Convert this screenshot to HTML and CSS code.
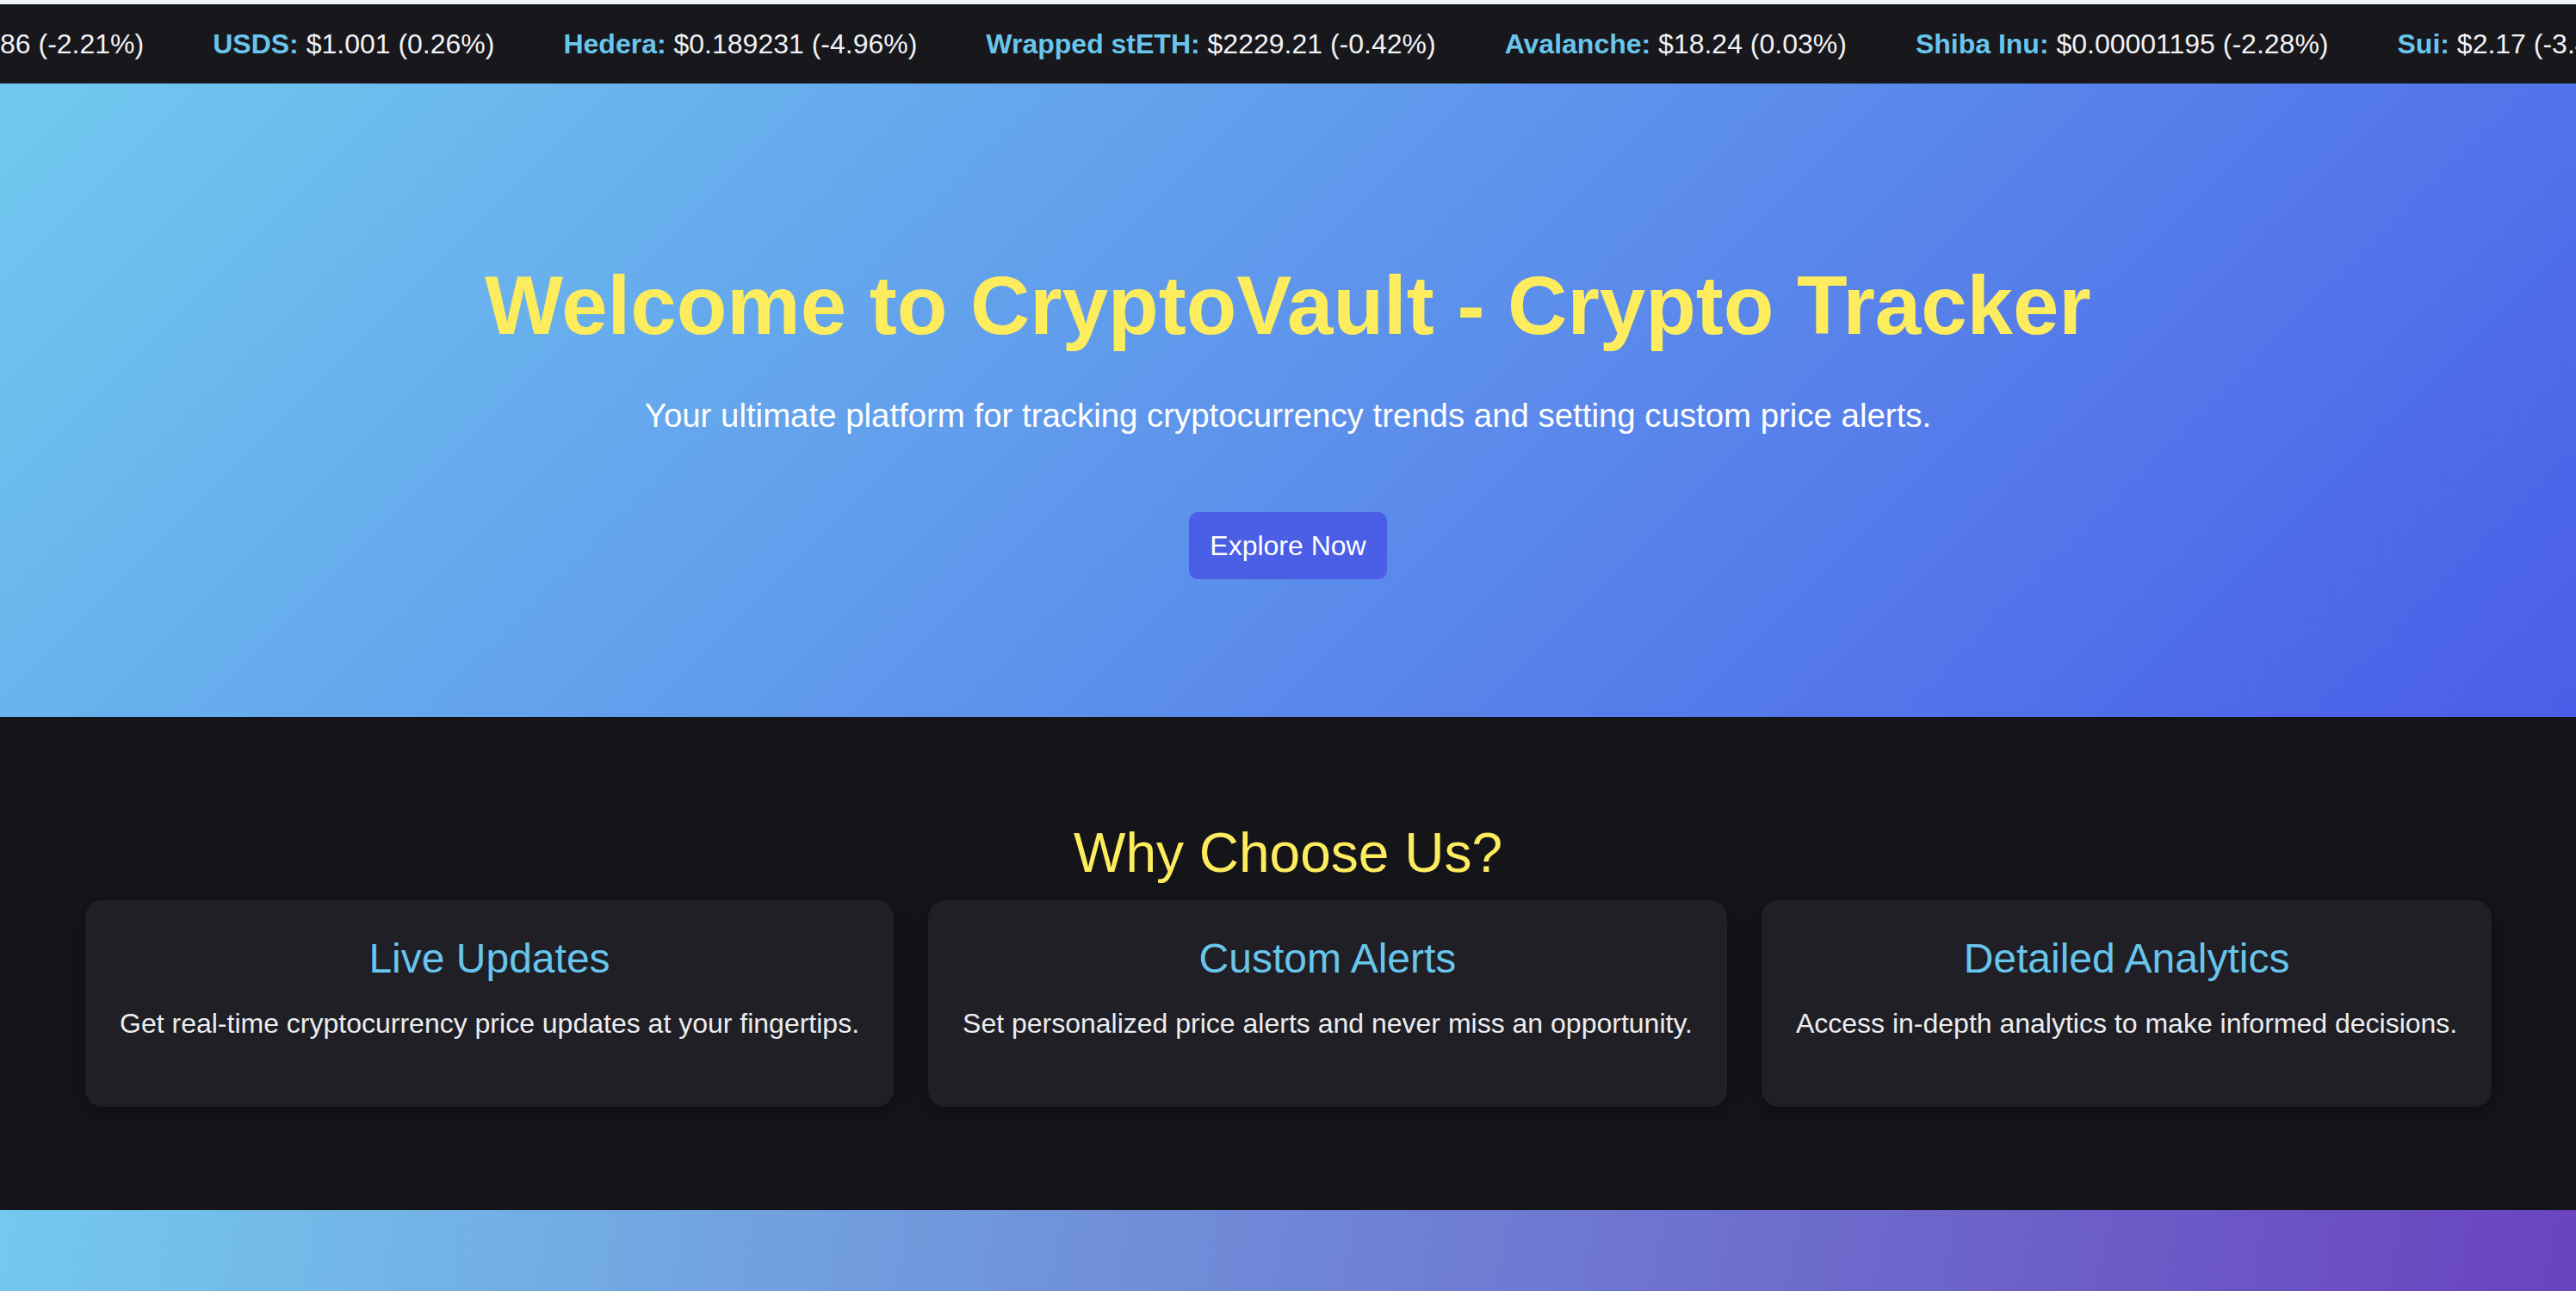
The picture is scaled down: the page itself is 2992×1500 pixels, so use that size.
FILE: index.html
```html
<!DOCTYPE html>
<html lang="en">
<head>
<meta charset="utf-8">
<title>CryptoVault - Crypto Tracker</title>
<link rel="stylesheet" href="styles.css">
</head>
<body>
  <div class="ticker">
    <div class="ticker-track">
      <span class="tick">86 (-2.21%)</span>
      <span class="tick"><b class="coin">USDS:</b> $1.001 (0.26%)</span>
      <span class="tick"><b class="coin">Hedera:</b> $0.189231 (-4.96%)</span>
      <span class="tick"><b class="coin">Wrapped stETH:</b> $2229.21 (-0.42%)</span>
      <span class="tick"><b class="coin">Avalanche:</b> $18.24 (0.03%)</span>
      <span class="tick"><b class="coin">Shiba Inu:</b> $0.00001195 (-2.28%)</span>
      <span class="tick"><b class="coin">Sui:</b> $2.17 (-3.41%)</span>
    </div>
  </div>

  <section class="hero">
    <h1 class="hero-title">Welcome to CryptoVault - Crypto Tracker</h1>
    <p class="hero-sub">Your ultimate platform for tracking cryptocurrency trends and setting custom price alerts.</p>
    <button class="hero-btn" type="button">Explore Now</button>
  </section>

  <section class="why">
    <h2 class="why-title">Why Choose Us?</h2>
    <div class="cards">
      <div class="card">
        <h3 class="card-title">Live Updates</h3>
        <p class="card-text">Get real-time cryptocurrency price updates at your fingertips.</p>
      </div>
      <div class="card">
        <h3 class="card-title">Custom Alerts</h3>
        <p class="card-text">Set personalized price alerts and never miss an opportunity.</p>
      </div>
      <div class="card">
        <h3 class="card-title">Detailed Analytics</h3>
        <p class="card-text">Access in-depth analytics to make informed decisions.</p>
      </div>
    </div>
  </section>

  <footer class="footer"></footer>
</body>
</html>
```

FILE: styles.css
```css
* { box-sizing: border-box; }

html, body {
  margin: 0;
  padding: 0;
}

body {
  background: #eef3f6;
  font-family: "Liberation Sans", Arial, Helvetica, sans-serif;
  color: #ffffff;
}

/* ticker */
.ticker {
  margin-top: 5px;
  height: 92px;
  background: #17171c;
  display: flex;
  align-items: center;
  overflow: hidden;
}

.ticker-track {
  display: flex;
  gap: 80px;
  white-space: nowrap;
  font-size: 32px;
  color: #f1f1f3;
}

.coin {
  color: #69c5ec;
  font-weight: 700;
}

/* hero */
.hero {
  background: linear-gradient(135deg, #71c9ef 0%, #4a5de8 100%);
  padding: 203px 0 160px;
  display: flex;
  flex-direction: column;
  align-items: center;
  text-align: center;
}

.hero-title {
  margin: 0 0 51px;
  font-size: 96px;
  font-weight: 700;
  color: #fdec5e;
  line-height: normal;
}

.hero-sub {
  margin: 0 0 90px;
  font-size: 38.4px;
  color: #ffffff;
}

.hero-btn {
  font-family: inherit;
  font-size: 32px;
  line-height: 38px;
  padding: 20px 24px;
  border: 0;
  border-radius: 10px;
  background: #4b5ee6;
  color: #ffffff;
}

/* why choose us */
.why {
  background: #151519;
  padding: 121px 99px 120px;
  text-align: center;
}

.why-title {
  margin: 0 0 18px;
  font-size: 64px;
  font-weight: 400;
  color: #fdec5e;
  line-height: normal;
}

.cards {
  display: flex;
  gap: 40px;
}

.card {
  flex: 1 1 auto;
  background: #1f1f25;
  border-radius: 20px;
  padding: 40px;
  box-shadow: 0 8px 24px rgba(0, 0, 0, 0.35);
}

.card-title {
  margin: 0 0 30px;
  font-size: 48px;
  font-weight: 400;
  color: #68c5ec;
  line-height: normal;
}

.card-text {
  margin: 0 0 38px;
  font-size: 32px;
  color: #ececee;
  white-space: nowrap;
}

/* footer */
.footer {
  height: 300px;
  background: linear-gradient(100deg, #74c9ee 0%, #6a42be 100%);
}
```
